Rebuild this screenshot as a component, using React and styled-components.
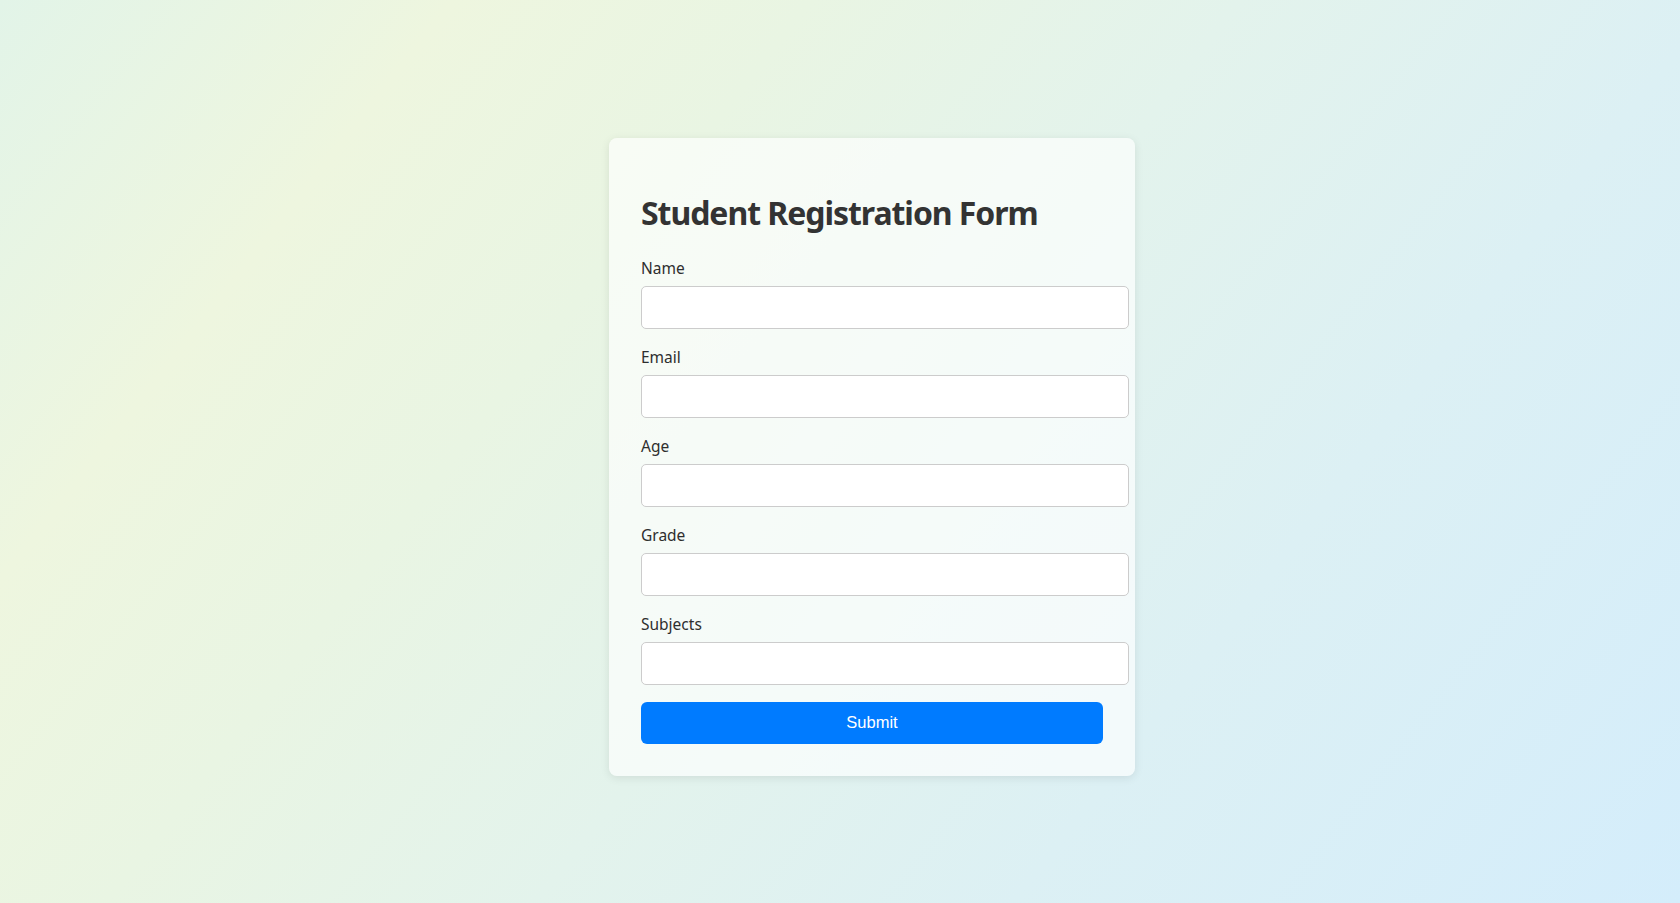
import React from "react";
import styled, { createGlobalStyle } from "styled-components";

const GlobalStyle = createGlobalStyle`
  html, body { margin: 0; padding: 0; }
  body {
    font-family: "Noto Sans", "Open Sans", sans-serif;
    background: linear-gradient(128deg, #e2f4e8 0%, #eef6df 19%, #e9f5e3 34%, #e3f3ec 52%, #dcf0f4 72%, #d4edfb 100%);
    min-height: 100vh;
  }
`;

const Page = styled.div`
  box-sizing: border-box;
  min-height: 100vh;
  display: flex;
  justify-content: center;
  align-items: center;
  padding: 10px 0 0 64px;
`;

const Card = styled.form`
  width: 462px;
  padding: 32px;
  background: rgba(255, 255, 255, 0.65);
  border-radius: 8px;
  box-shadow: 0 2px 10px rgba(0, 0, 0, 0.09);
`;

const Title = styled.h1`
  margin: 21px 0 23px;
  font-size: 32px;
  line-height: 43px;
  font-weight: 700;
  color: #333;
  letter-spacing: -1.05px;
`;

const Group = styled.div`
  margin-bottom: 17px;
`;

const Label = styled.label`
  display: block;
  padding-top: 1px;
  margin-bottom: 7px;
  font-size: 15.5px;
  line-height: 21px;
  color: #2e2e2e;
`;

const Input = styled.input`
  display: block;
  width: 100%;
  box-sizing: content-box;
  padding: 10px 12px;
  font-family: inherit;
  font-size: 16px;
  line-height: 21px;
  height: 21px;
  border: 1px solid #ccc;
  border-radius: 5px;
  background: #fff;
  outline: none;
`;

const Button = styled.button`
  display: block;
  width: 100%;
  height: 42px;
  border: none;
  border-radius: 6px;
  background: #007bff;
  color: #fff;
  font-family: "Liberation Sans", Arial, sans-serif;
  font-size: 16.5px;
  cursor: pointer;
`;

const fields = ["Name", "Email", "Age", "Grade", "Subjects"];

export default function App() {
  return (
    <>
      <GlobalStyle />
      <Page>
        <Card onSubmit={(e) => e.preventDefault()}>
          <Title>Student Registration Form</Title>
          {fields.map((f) => (
            <Group key={f}>
              <Label htmlFor={f}>{f}</Label>
              <Input id={f} type="text" />
            </Group>
          ))}
          <Button type="submit">Submit</Button>
        </Card>
      </Page>
    </>
  );
}
